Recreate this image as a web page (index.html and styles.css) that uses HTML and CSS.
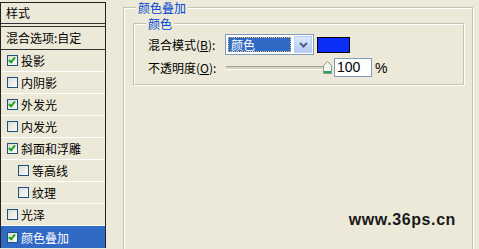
FILE: index.html
```html
<!DOCTYPE html>
<html>
<head>
<meta charset="utf-8">
<link rel="stylesheet" href="styles.css">
</head>
<body>
<div class="list">
  <div class="head">样式</div>
  <div class="blend">混合选项:自定</div>
  <div class="row"><span class="cb on"></span>投影</div>
  <div class="row"><span class="cb"></span>内阴影</div>
  <div class="row"><span class="cb on"></span>外发光</div>
  <div class="row"><span class="cb"></span>内发光</div>
  <div class="row"><span class="cb on"></span>斜面和浮雕</div>
  <div class="row sub"><span class="cb"></span>等高线</div>
  <div class="row sub"><span class="cb"></span>纹理</div>
  <div class="row"><span class="cb"></span>光泽</div>
  <div class="row sel"><span class="cb on"></span>颜色叠加</div>
</div>
<div class="main">
  <div class="group outer">
    <span class="legend">颜色叠加</span>
    <div class="group inner">
      <span class="legend">颜色</span>
      <div class="line l1">
        <span class="label">混合模式(<u>B</u>):</span>
        <span class="combo"><span class="val"><span class="valtxt">颜色</span></span><span class="btn"><svg width="9" height="6" viewBox="0 0 9 6"><path d="M1 1 L4.5 4.5 L8 1" fill="none" stroke="#4d6185" stroke-width="2"/></svg></span></span>
        <span class="swatch"></span>
      </div>
      <div class="line l2">
        <span class="label">不透明度(<u>O</u>):</span>
        <span class="slider"><span class="track"></span><svg class="thumb" width="9" height="13" viewBox="0 0 9 13"><path d="M4.5 0.5 L8.5 4.5 L8.5 12.5 L0.5 12.5 L0.5 4.5 Z" fill="#f4f3ee" stroke="#8e9a8c"/><rect x="1" y="10" width="7" height="2" fill="#21a65a"/></svg></span>
        <span class="num">100</span>
        <span class="pct">%</span>
      </div>
    </div>
    <div class="mark">www.36ps.cn</div>
  </div>
</div>
</body>
</html>
```
FILE: styles.css
```css
html, body {
  margin: 0;
  padding: 0;
  background: #ece9d8;
  overflow: hidden;
}
body {
  display: flex;
  align-items: flex-start;
  font-family: "Noto Sans CJK SC", "Liberation Sans", sans-serif;
  font-size: 12px;
  color: #000;
  height: 249px;
}
.list {
  margin-top: 2px;
  width: 104px;
  border: 1px solid #222;
  border-bottom: none;
  display: flex;
  flex-direction: column;
}
.head {
  height: 20px;
  line-height: 20px;
  padding-left: 5px;
  border-bottom: 1px solid #333;
  margin-bottom: 2px;
}
.blend {
  border-top: 1px solid #333;
  height: 22px;
  line-height: 22px;
  padding-left: 5px;
  border-bottom: 1px solid #333;
}
.row {
  height: 21px;
  display: flex;
  align-items: center;
  border-bottom: 1px solid #fff;
  padding-left: 6px;
}
.row.sub {
  padding-left: 17px;
}
.row.sel {
  background: #316ac5;
  color: #fff;
  border-bottom: none;
  height: 22px;
}
.cb {
  width: 9px;
  height: 9px;
  border: 1px solid #1c5180;
  background: linear-gradient(135deg, #dcdcd7, #fbfbf9);
  margin-right: 3px;
  flex: none;
  position: relative;
}
.cb.on::after {
  content: "";
  position: absolute;
  left: 2px;
  top: 0px;
  width: 2px;
  height: 5px;
  border-right: 2px solid #21a121;
  border-bottom: 2px solid #21a121;
  transform: rotate(40deg);
}
.main {
  padding-left: 17px;
  padding-top: 7px;
}
.group {
  border: 1px solid #c3c2b4;
  box-shadow: inset 1px 1px 0 #fff, 1px 1px 0 #fff;
  display: flex;
  flex-direction: column;
}
.outer {
  width: 348px;
  height: 250px;
}
.inner {
  margin-top: 9px;
  margin-left: 9px;
  width: 329px;
  height: 60px;
}
.legend {
  align-self: flex-start;
  margin-top: -7px;
  margin-left: 12px;
  padding: 0 2px;
  line-height: 13px;
  height: 13px;
  background: #ece9d8;
  color: #0046d5;
}
.line {
  display: flex;
  align-items: center;
  padding-left: 14px;
}
.l1 {
  margin-top: 4px;
  height: 21px;
}
.l2 {
  margin-top: 3px;
  height: 19px;
}
.label {
  width: 77px;
  flex: none;
}
.label u {
  text-decoration: underline;
}
.combo {
  width: 87px;
  height: 19px;
  border: 1px solid #7f9db9;
  background: #fff;
  display: flex;
  align-items: stretch;
}
.val {
  flex: 1;
  margin: 2px;
  background: #316ac5;
  outline: 1px dotted #e0c070;
  outline-offset: -1px;
  color: #fff;
  display: flex;
  align-items: center;
  padding-left: 3px;
}
.btn {
  width: 16px;
  margin: 1px;
  background: linear-gradient(#dce6fd, #b6cbf8);
  border: 1px solid #b9cdf6;
  display: flex;
  align-items: center;
  justify-content: center;
}
.swatch {
  width: 31px;
  height: 14px;
  border: 1px solid #000;
  background: #0a2ef5;
  margin-left: 3px;
}
.slider {
  width: 106px;
  height: 19px;
  display: flex;
  align-items: center;
  margin-left: 1px;
}
.track {
  width: 98px;
  height: 2px;
  border-top: 1px solid #a4a294;
  border-bottom: 1px solid #fff;
  background: #d5d2c0;
  margin-top: 1px;
}
.thumb {
  margin-left: -1px;
}
.num {
  width: 34px;
  height: 17px;
  border: 1px solid #7f9db9;
  background: #fff;
  font-family: "Liberation Sans", sans-serif;
  font-size: 14px;
  line-height: 17px;
  padding-left: 2px;
  margin-left: 2px;
}
.pct {
  font-family: "Liberation Sans", sans-serif;
  font-size: 14px;
  margin-left: 3px;
}
.mark {
  align-self: flex-end;
  margin-right: 16px;
  margin-top: 126px;
  font-family: "Liberation Sans", sans-serif;
  font-weight: bold;
  font-size: 16px;
  line-height: 18px;
  letter-spacing: 0.6px;
  color: #1a1a1a;
}
```
